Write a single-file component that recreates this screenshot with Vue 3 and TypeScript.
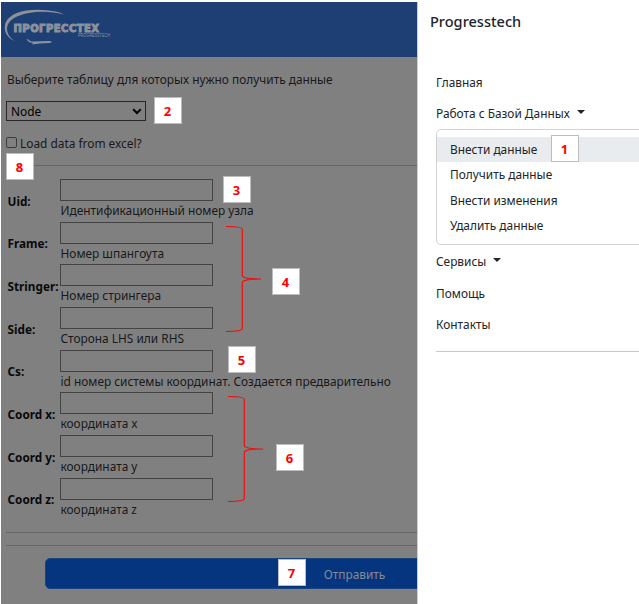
<script setup lang="ts">
interface Field { name: string; hint: string }
interface Mark { n: number; x: number; y: number }

const fields: Field[] = [
  { name: 'Uid:', hint: 'Идентификационный номер узла' },
  { name: 'Frame:', hint: 'Номер шпангоута' },
  { name: 'Stringer:', hint: 'Номер стрингера' },
  { name: 'Side:', hint: 'Сторона LHS или RHS' },
  { name: 'Cs:', hint: 'id номер системы координат. Создается предварительно' },
  { name: 'Coord x:', hint: 'координата x' },
  { name: 'Coord y:', hint: 'координата y' },
  { name: 'Coord z:', hint: 'координата z' },
]
const actions: string[] = ['Внести данные', 'Получить данные', 'Внести изменения', 'Удалить данные']
const marks: Mark[] = [
  { n: 1, x: 551, y: 135 },
  { n: 2, x: 154, y: 97 },
  { n: 3, x: 223, y: 176 },
  { n: 4, x: 272, y: 268 },
  { n: 5, x: 228, y: 346 },
  { n: 6, x: 276, y: 444 },
  { n: 7, x: 278, y: 559 },
  { n: 8, x: 6, y: 153 },
]
</script>

<template>
  <div class="screen">
    <main class="page">
      <header class="bar">
        <svg class="logo" width="120" height="44" viewBox="0 0 120 44">
          <path d="M11.500 36.500C3 33 -1 26 1.500 18C6 7 24 3 45 5.500C53 6.500 58 8 60 9.500C48 6.500 36 6 25 8C11 10.500 3 16 3 24C3.500 30 7 34 11.500 36.500Z" />
          <path d="M22.500 34C25 34 25.500 36.200 28 36.500L43 36C48 35.500 49 37 46 38L36 38.500L28 39.500L29 38C25 37.500 24 36.500 22.500 34Z" />
          <text class="brand" x="9.500" y="27" textLength="85.500" lengthAdjust="spacing">ПРОГРЕССТЕХ</text>
          <text class="sub" x="74" y="31.800" textLength="32" lengthAdjust="spacingAndGlyphs">PROGRESSTECH</text>
        </svg>
      </header>
      <p class="prompt">Выберите таблицу для которых нужно получить данные</p>
      <div class="picker">
        <select class="select"><option>Node</option></select>
        <svg class="chev" width="10" height="7" viewBox="0 0 10 7"><path d="M1.200 1.200L5 5L8.800 1.200" /></svg>
      </div>
      <label class="excel"><span class="box"></span><span>Load data from excel?</span></label>
      <hr class="rule first">
      <form class="fields">
        <div v-for="f in fields" :key="f.name" class="row">
          <label class="name">{{ f.name }}</label>
          <div class="cell">
            <input class="input" type="text">
            <span class="hint">{{ f.hint }}</span>
          </div>
        </div>
      </form>
      <hr class="rule second">
      <hr class="rule third">
      <button class="submit" type="button">Отправить</button>
    </main>

    <aside class="drawer">
      <h5 class="title">Progresstech</h5>
      <nav class="nav">
        <a class="link">Главная</a>
        <a class="link">Работа с Базой Данных<i class="caret"></i></a>
        <div class="menu">
          <a v-for="(a, i) in actions" :key="a" class="item" :class="{ active: i === 0 }">{{ a }}</a>
        </div>
        <a class="link">Сервисы<i class="caret"></i></a>
        <a class="link">Помощь</a>
        <a class="link">Контакты</a>
        <hr class="end">
      </nav>
    </aside>

    <svg class="braces" width="639" height="604" viewBox="0 0 639 604">
      <path d="M226 226.500C236 226.500 242.300 227 242.300 229.500V275.500C242.300 278 250 279 261 279C250 279 242.300 280 242.300 282.500V328.500C242.300 331 236 331.500 226 331.500" />
      <path d="M228 396.500C238 396.500 244.300 397 244.300 399.500V445.500C244.300 448 252 449 263 449C252 449 244.300 450 244.300 452.500V498.500C244.300 501 238 501.500 228 501.500" />
    </svg>
    <span v-for="m in marks" :key="m.n" class="mark" :style="{ left: m.x + 'px', top: m.y + 'px' }">{{ m.n }}</span>
  </div>
</template>

<style>
body { margin: 0; background: #fff; }
</style>

<style scoped>
* { box-sizing: border-box; }
.screen { position: relative; display: flex; width: 639px; height: 604px; padding: 2px 0 0 1px; overflow: hidden; font: 11.88px/20px "Noto Sans", "Open Sans", sans-serif; color: #17191b; }
.page { display: flex; flex-direction: column; align-items: flex-start; width: 416px; height: 602px; overflow: hidden; background: #808080; }
.bar { flex: none; width: 100%; height: 55px; padding: 3px 0 0 3px; background: #1e3f73; }
.logo { display: block; overflow: visible; fill: #8b929b; }
.brand { font: bold 10px "DejaVu Sans", sans-serif; stroke: #8b929b; stroke-width: 1px; }
.sub { font: 4.500px "Liberation Sans", sans-serif; }
.prompt { height: 20px; margin: 12px 0 0 6px; white-space: nowrap; }
.picker { display: grid; width: 140px; height: 20px; margin: 12px 0 0 5px; }
.select { grid-area: 1 / 1; appearance: none; width: 100%; height: 20px; padding: 0 4px; border: 1px solid #272727; border-radius: 0; background: #808080; color: #000; font: inherit; line-height: 18px; }
.chev { grid-area: 1 / 1; justify-self: end; align-self: center; margin-right: 4px; fill: none; stroke: #000; stroke-width: 2; }
.excel { display: flex; align-items: center; gap: 3px; height: 20px; margin: 12px 0 0 5px; }
.box { width: 11px; height: 11px; margin-top: -2px; border: 1px solid #3b3b3b; border-radius: 2px; }
.rule { flex: none; width: 411px; height: 1px; margin: 0 0 0 5px; border: 0; background: #666; }
.first { margin-top: 12px; }
.fields { display: flex; flex-direction: column; width: 411px; margin: 13px 0 0 5px; }
.row { display: flex; align-items: center; height: 42.660px; }
.name { flex: none; width: 54px; padding: 1px 0 0 1.500px; font-weight: bold; color: #090a0b; font-size: 11.750px; white-space: nowrap; }
.cell { display: flex; flex-direction: column; height: 100%; }
.input { flex: none; width: 153px; height: 22px; padding: 0; border: 1px solid #434343; border-radius: 0; background: transparent; }
.hint { height: 20px; padding-left: .5px; line-height: 18.500px; white-space: nowrap; }
.second { margin-top: 12px; }
.third { margin-top: 12px; }
.submit { flex: none; width: 620px; height: 31px; margin: 12px 0 0 43.500px; padding: 0; border: 1px solid #1a4480; border-radius: 5px; background: #05357e; color: #858b94; font: inherit; }
.drawer { flex: none; width: 222px; height: 602px; padding: 9px 0 0 12px; border-left: 1px solid #ccc; background: #fff; color: #212529; }
.title { height: 20px; margin: 0; font-size: 14.550px; font-weight: 500; line-height: 20px; }
.nav { display: flex; flex-direction: column; margin: 35px 0 0 6px; }
.link { display: flex; align-items: center; height: 31.300px; white-space: nowrap; }
.caret { margin: -2px 0 0 7px; border: 4px solid transparent; border-top-color: #212529; border-bottom: 0; }
.menu { width: 230px; height: 116px; margin-bottom: 1px; padding: 7px 0 6px; border: 1px solid #d3d3d3; border-radius: 5px; }
.item { display: flex; align-items: center; height: 25.200px; padding: 0 0 0 13px; }
.active { background: #e9ecef; }
.end { width: 203px; height: 1px; margin: 12px 0 0; border: 0; background: #c8c9ca; }
.braces { position: absolute; inset: 0; fill: none; stroke: #f00d0d; stroke-width: 1.200; }
.mark { position: absolute; width: 28px; height: 27px; border: 1px solid #bcbcbc; background: #fff; color: #f00; font: bold 13px/26px "Open Sans", sans-serif; text-align: center; padding-right: 1px; }
</style>
